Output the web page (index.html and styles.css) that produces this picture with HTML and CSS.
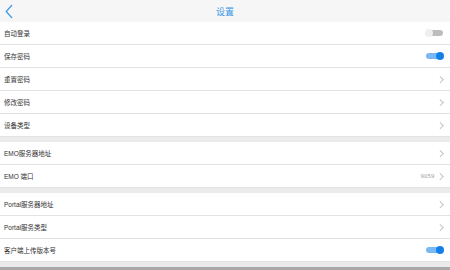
FILE: index.html
```html
<!DOCTYPE html>
<html lang="zh-CN">
<head>
  <meta charset="UTF-8">
  <meta name="viewport" content="width=device-width, initial-scale=1.0">
  <title>设置</title>
  <link rel="stylesheet" href="styles.css">
</head>
<body>
  <header class="topbar">
    <a class="back" href="#">
      <svg width="8" height="15" viewBox="0 0 8 15"><path d="M7 1 L1.2 7.5 L7 14" fill="none" stroke="#3a97e6" stroke-width="1.2"/></svg>
    </a>
    <h1>设置</h1>
  </header>

  <section class="group">
    <div class="row"><span>自动登录</span><span class="switch"></span></div>
    <div class="row"><span>保存密码</span><span class="switch on"></span></div>
    <div class="row"><span>重置密码</span><span class="arrow"></span></div>
    <div class="row"><span>修改密码</span><span class="arrow"></span></div>
    <div class="row"><span>设备类型</span><span class="arrow"></span></div>
  </section>

  <section class="group">
    <div class="row"><span>EMO服务器地址</span><span class="arrow"></span></div>
    <div class="row"><span>EMO 端口</span><span class="value">9059</span><span class="arrow"></span></div>
  </section>

  <section class="group">
    <div class="row"><span>Portal服务器地址</span><span class="arrow"></span></div>
    <div class="row"><span>Portal服务类型</span><span class="arrow"></span></div>
    <div class="row"><span>客户端上传版本号</span><span class="switch on"></span></div>
  </section>

  <div class="bottom"></div>
</body>
</html>
```

FILE: styles.css
```css
body {
  margin: 0;
  width: 450px;
  height: 270px;
  overflow: hidden;
  background: #ebebeb;
  font-family: "Liberation Sans", "Noto Sans CJK SC", sans-serif;
  color: #333;
}
.topbar {
  height: 22px;
  background: #f6f6f6;
  display: flex;
  align-items: center;
  justify-content: center;
  position: relative;
}
.topbar h1 {
  margin: 0;
  font-size: 9px;
  font-weight: normal;
  color: #3a97e6;
}
.back {
  position: absolute;
  left: 5px;
  top: 4px;
  display: flex;
}
.group {
  background: #fff;
  margin-bottom: 5px;
}
.row {
  height: 22px;
  border-bottom: 1px solid #e3e3e3;
  display: flex;
  align-items: center;
  padding: 0 6px 0 4px;
  font-size: 6.5px;
}
.row span:first-child {
  flex: 1;
}
.value {
  color: #999;
  font-family: "DejaVu Sans", sans-serif;
  font-size: 5.5px;
  margin-right: 3px;
}
.arrow {
  width: 3.5px;
  height: 3.5px;
  border-top: 1px solid #c4c4c4;
  border-right: 1px solid #c4c4c4;
  transform: rotate(45deg);
  margin-right: 2px;
}
.switch {
  width: 17px;
  height: 6px;
  border-radius: 3px;
  background: #bdbdbd;
  position: relative;
  margin-right: 1px;
}
.switch::after {
  content: "";
  position: absolute;
  left: -1px;
  top: -1px;
  width: 8px;
  height: 8px;
  border-radius: 50%;
  background: #efefef;
}
.switch.on {
  background: #79b8f2;
}
.switch.on::after {
  left: auto;
  right: -1px;
  background: #1380e8;
}
.bottom {
  height: 3px;
  background: #a9a9a9;
}
```
